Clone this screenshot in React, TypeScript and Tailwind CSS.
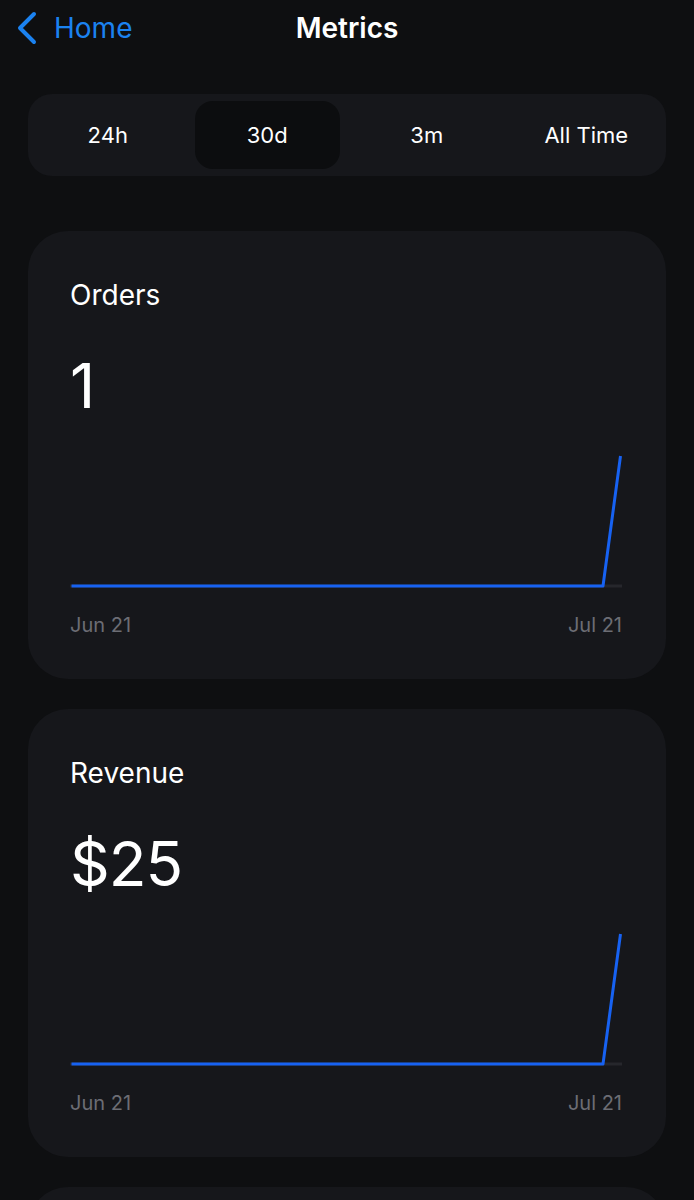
import React, { useState } from 'react'

const ranges = ['24h', '30d', '3m', 'All Time']

function LineChart() {
  return (
    <svg width="552" height="140" viewBox="0 0 552 140" className="block">
      <line x1="0" y1="132" x2="552" y2="132" stroke="#26272c" strokeWidth="3" />
      <polyline
        points="1.5,132 533,132 550.5,2"
        fill="none"
        stroke="#1762f2"
        strokeWidth="3"
        strokeLinejoin="round"
        strokeLinecap="butt"
      />
    </svg>
  )
}

function MetricCard({ title, value }: { title: string; value: string }) {
  return (
    <div className="mx-[28px] rounded-[40px] bg-[#16171b] pl-[42px] pt-[47px] pb-[42px]">
      <div className="text-[28px] leading-[34px] text-white">{title}</div>
      <div className="mt-[43px] text-[62px] leading-[62px] tracking-[-1px] text-white">{value}</div>
      <div className="mt-[37px]">
        <LineChart />
      </div>
      <div className="mt-[19px] flex w-[552px] justify-between text-[20px] leading-[24px] text-[#6c6d74]">
        <span>Jun 21</span>
        <span>Jul 21</span>
      </div>
    </div>
  )
}

export default function App() {
  const [range, setRange] = useState('30d')

  return (
    <div className="min-h-[1200px] bg-[#0e0f11] font-['Inter',sans-serif] text-white">
      {/* Header */}
      <div className="grid h-[56px] grid-cols-[1fr_auto_1fr] items-center">
        <button className="flex items-center gap-[16px] pl-[16px] text-[#1b82f0]">
          <svg width="22" height="34" viewBox="0 0 22 34" className="block">
            <path d="M18 3 L4 17 L18 31" fill="none" stroke="#1b82f0" strokeWidth="4" strokeLinecap="round" strokeLinejoin="round" />
          </svg>
          <span className="text-[28px] leading-[34px]">Home</span>
        </button>
        <div className="text-[28px] font-semibold leading-[34px]">Metrics</div>
        <div />
      </div>

      {/* Range selector */}
      <div className="mx-[28px] mt-[38px] grid grid-cols-4 rounded-[24px] bg-[#16171b]">
        {ranges.map((r) => (
          <div key={r} className="p-[7px]">
            <button
              onClick={() => setRange(r)}
              className={`flex h-[68px] w-full items-center justify-center rounded-[18px] text-[22px] ${
                range === r ? 'bg-[#0c0d0f]' : ''
              }`}
            >
              {r}
            </button>
          </div>
        ))}
      </div>

      <div className="mt-[55px] flex flex-col gap-[30px]">
        <MetricCard title="Orders" value="1" />
        <MetricCard title="Revenue" value="$25" />
        <div className="mx-[28px] h-[200px] rounded-[40px] bg-[#16171b]" />
      </div>
    </div>
  )
}
